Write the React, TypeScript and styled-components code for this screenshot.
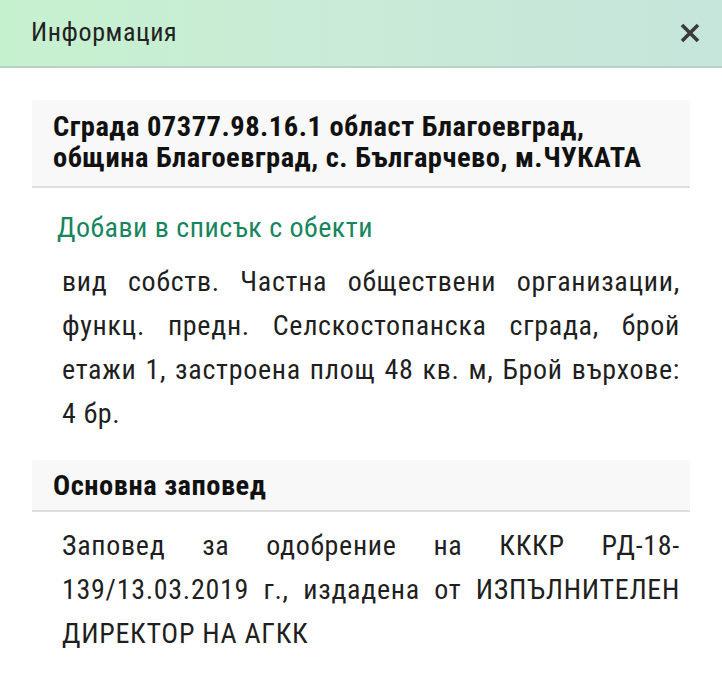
import styled, { createGlobalStyle } from 'styled-components';

const GlobalStyle = createGlobalStyle`
  html, body {
    margin: 0;
    padding: 0;
    background: #ffffff;
  }
  body {
    font-family: "Roboto Condensed", "Liberation Sans Narrow", Roboto, sans-serif;
    color: #1f1f1f;
  }
`;

const Page = styled.div`
  width: 722px;
  min-height: 700px;
  background: #ffffff;
`;

const Header = styled.header`
  display: flex;
  align-items: center;
  justify-content: space-between;
  height: 68px;
  padding: 0 16px 0 31px;
  background: linear-gradient(90deg, #c6f1cf 0%, #c9ebd6 45%, #c6e5db 100%);
  border-bottom: 2px solid #b7d3c5;
  box-sizing: border-box;
`;

const Title = styled.h1`
  margin: 0 0 2px 0;
  font-size: 26px;
  letter-spacing: 0.6px;
  font-weight: 400;
  color: #222222;
`;

const CloseButton = styled.button`
  display: flex;
  align-items: center;
  justify-content: center;
  width: 32px;
  height: 32px;
  padding: 0;
  border: none;
  background: transparent;
  cursor: pointer;
`;

const Content = styled.main`
  display: flex;
  flex-direction: column;
  padding: 32px 32px 0 32px;
`;

const SectionHead = styled.div<{ $pad: string }>`
  padding: ${(p) => p.$pad};
  background: #f8f8f8;
  border-radius: 4px 4px 0 0;
  border-bottom: 2px solid #dedede;
  font-size: 28.5px;
  letter-spacing: 0.5px;
  font-weight: 700;
  line-height: 31px;
  color: #111111;
`;

const AddLink = styled.a`
  display: block;
  margin: 25px 0 0 25px;
  font-size: 28px;
  letter-spacing: 0.5px;
  line-height: 30px;
  color: #17855d;
  text-decoration: none;
  cursor: pointer;
`;

const Body = styled.p<{ $top: number }>`
  margin: ${(p) => p.$top}px 10px 0 30px;
  font-size: 28px;
  letter-spacing: 0.7px;
  line-height: 44px;
  text-align: justify;
  color: #1f1f1f;
`;

const Spacer = styled.div<{ $h: number }>`
  height: ${(p) => p.$h}px;
`;

const App = () => {
  return (
    <Page>
      <GlobalStyle />
      <Header>
        <Title>Информация</Title>
        <CloseButton aria-label="Затвори">
          <svg width="20" height="20" viewBox="0 0 20 20">
            <path d="M2 2 L18 18 M18 2 L2 18" stroke="#3a3a3a" strokeWidth="3.6" strokeLinecap="butt" />
          </svg>
        </CloseButton>
      </Header>
      <Content>
        <SectionHead $pad="11px 20px 13px 21px">
          Сграда 07377.98.16.1 област Благоевград, община Благоевград, с. Българчево, м.ЧУКАТА
        </SectionHead>
        <AddLink>Добави в списък с обекти</AddLink>
        <Body $top={17}>
          вид собств. Частна обществени организации, функц. предн. Селскостопанска сграда, брой етажи 1,
          застроена площ 48 кв. м, Брой върхове: 4 бр.
        </Body>
        <Spacer $h={24} />
        <SectionHead $pad="10px 20px 9px 21px">Основна заповед</SectionHead>
        <Body $top={12}>
          Заповед за одобрение на КККР РД-18-
          <wbr />
          139/13.03.2019 г., издадена от ИЗПЪЛНИТЕЛЕН ДИРЕКТОР НА АГКК
        </Body>
      </Content>
    </Page>
  );
};

export default App;
